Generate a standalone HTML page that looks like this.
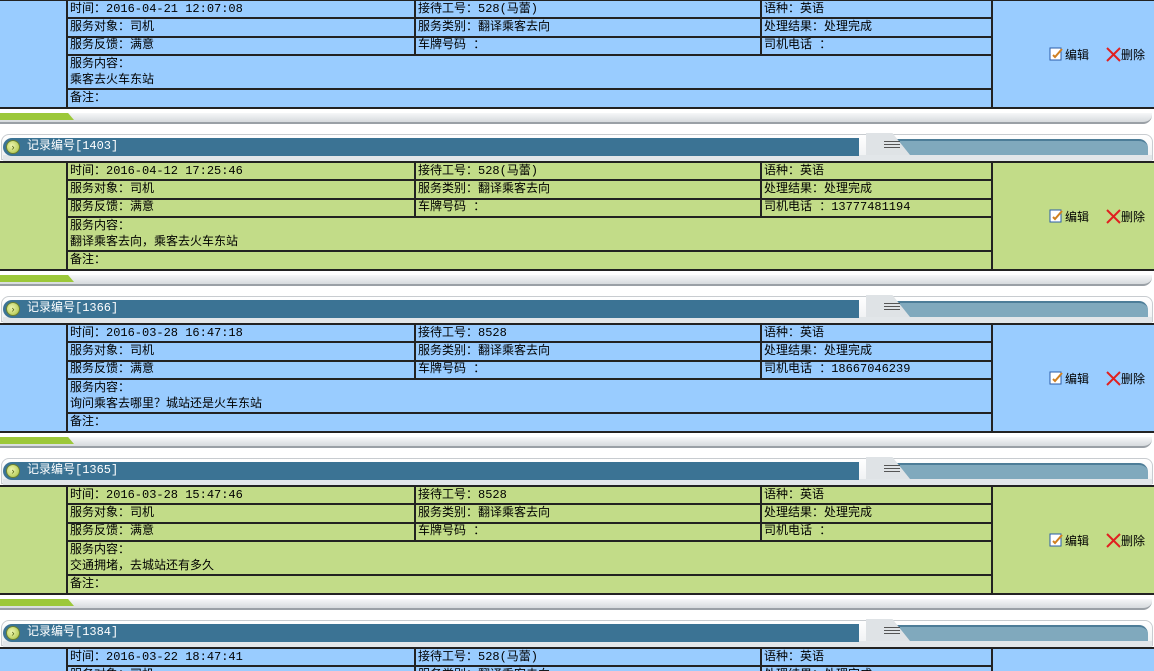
<!DOCTYPE html>
<html><head><meta charset="utf-8"><style>
*{margin:0;padding:0;box-sizing:border-box}
html,body{width:1154px;height:671px;overflow:hidden}
body{background:#fff;position:relative;font:12px "Liberation Mono","Noto Sans CJK SC",monospace;color:#000}
.rec{position:absolute;left:0;width:1154px;height:162px}
.hd{position:absolute;left:0;top:0;width:1154px;height:29px}
.hd .ol{position:absolute;left:1px;top:2px;width:1152px;height:26px;border:1px solid #c8ccd0;border-radius:8px 8px 0 0;background:linear-gradient(#fff,#eef0f2)}
.hd .bar{position:absolute;left:3px;top:6px;width:856px;height:18px;background:#3b7394;border-radius:9px 0 0 9px}
.hd .rb{position:absolute;left:895px;top:7px;width:253px;height:16px;background:#80a9bd;border-top:2px solid #4d7d98;border-radius:0 9px 0 0}
.hd .tab{position:absolute;left:866px;top:1px;width:44px;height:22px;background:#dfe3e6;clip-path:polygon(0 100%,0 0,60% 0,100% 100%);}
.hd .tl{position:absolute;left:884px;width:16px;height:1px;background:#555}
.hd .strip{position:absolute;left:3px;top:23px;width:1149px;height:6px;background:#e2e6e9}
.hd .ic{position:absolute;left:6px;top:8px;width:14px;height:14px;border-radius:50%;background:radial-gradient(circle at 40% 40%,#eef6b0,#a8c040);border:1px solid #6a8030;font:9px "Liberation Sans";color:#4a5a10;text-align:center;line-height:12px}
.hd .tt{position:absolute;left:27px;top:6px;color:#fff;font:12px "Liberation Mono","Noto Sans CJK SC",monospace;line-height:16px}
.tb{position:absolute;left:0;top:29px;width:1154px;height:110px;border-top:2px solid #222;border-bottom:2px solid #222}
.c{position:absolute;padding-left:2px;line-height:16px;white-space:nowrap}
.v{position:absolute;top:0;bottom:0;width:2px;background:#222}
.vs{position:absolute;top:0;height:54px;width:2px;background:#222}
.h{position:absolute;left:68px;width:924px;height:2px;background:#222}
.act{position:absolute;top:45px;left:1049px;line-height:16px}
.ft{position:absolute;left:0;top:139px;width:1154px;height:23px}
.ft .g{position:absolute;left:0;top:4px;width:1152px;height:11px;background:linear-gradient(#f6f7f8,#d6dadd);border-bottom:2px solid #9aa0a6;border-radius:0 0 9px 0}
.ft .gr{position:absolute;left:0;top:4px;width:74px;height:7px;background:#9cc83a;clip-path:polygon(0 0,92% 0,100% 100%,0 100%)}
</style></head><body>

<div class="rec" style="top:-30px;">
 <div class="tb" style="background:#99ccff">
  <div class="v" style="left:66px"></div><div class="vs" style="left:414px"></div><div class="vs" style="left:760px"></div><div class="v" style="left:991px"></div>
  <div class="h" style="top:16px"></div><div class="h" style="top:35px"></div><div class="h" style="top:53px"></div><div class="h" style="top:87px"></div>
  <div class="c" style="left:68px;top:0">时间：2016-04-21 12:07:08</div>
  <div class="c" style="left:416px;top:0">接待工号：528(马蕾)</div>
  <div class="c" style="left:762px;top:0">语种：英语</div>
  <div class="c" style="left:68px;top:18px">服务对象：司机</div>
  <div class="c" style="left:416px;top:18px">服务类别：翻译乘客去向</div>
  <div class="c" style="left:762px;top:18px">处理结果：处理完成</div>
  <div class="c" style="left:68px;top:36px">服务反馈：满意</div>
  <div class="c" style="left:416px;top:36px">车牌号码 ：</div>
  <div class="c" style="left:762px;top:36px">司机电话 ：</div>
  <div class="c" style="left:68px;top:55px">服务内容：<br>乘客去火车东站</div>
  <div class="c" style="left:68px;top:89px">备注：</div>
  <div class="act"><svg width="16" height="16" style="vertical-align:-3px"><rect x="1" y="2" width="11" height="12" fill="#fff" stroke="#2a5ca8"/><path d="M4 9l2 2 7-8" stroke="#d08020" stroke-width="2" fill="none"/></svg>编辑<span style="display:inline-block;width:17px"></span><svg width="15" height="15" style="vertical-align:-3px"><path d="M1 1L14 14M14 1L1 14" stroke="#e02020" stroke-width="2"/></svg>删除</div>
 </div>
 <div class="ft"><div class="g"></div><div class="gr"></div></div>
</div>

<div class="rec" style="top:132px;">
 <div class="hd"><div class="ol"></div><div class="strip"></div><div class="bar"></div><div class="rb"></div><div class="tab"></div><div class="tl" style="top:9px"></div><div class="tl" style="top:12px"></div><div class="tl" style="top:15px"></div><div class="ic">›</div><div class="tt">记录编号[1403]</div></div>
 <div class="tb" style="background:#c2dc88">
  <div class="v" style="left:66px"></div><div class="vs" style="left:414px"></div><div class="vs" style="left:760px"></div><div class="v" style="left:991px"></div>
  <div class="h" style="top:16px"></div><div class="h" style="top:35px"></div><div class="h" style="top:53px"></div><div class="h" style="top:87px"></div>
  <div class="c" style="left:68px;top:0">时间：2016-04-12 17:25:46</div>
  <div class="c" style="left:416px;top:0">接待工号：528(马蕾)</div>
  <div class="c" style="left:762px;top:0">语种：英语</div>
  <div class="c" style="left:68px;top:18px">服务对象：司机</div>
  <div class="c" style="left:416px;top:18px">服务类别：翻译乘客去向</div>
  <div class="c" style="left:762px;top:18px">处理结果：处理完成</div>
  <div class="c" style="left:68px;top:36px">服务反馈：满意</div>
  <div class="c" style="left:416px;top:36px">车牌号码 ：</div>
  <div class="c" style="left:762px;top:36px">司机电话 ：13777481194</div>
  <div class="c" style="left:68px;top:55px">服务内容：<br>翻译乘客去向，乘客去火车东站</div>
  <div class="c" style="left:68px;top:89px">备注：</div>
  <div class="act"><svg width="16" height="16" style="vertical-align:-3px"><rect x="1" y="2" width="11" height="12" fill="#fff" stroke="#2a5ca8"/><path d="M4 9l2 2 7-8" stroke="#d08020" stroke-width="2" fill="none"/></svg>编辑<span style="display:inline-block;width:17px"></span><svg width="15" height="15" style="vertical-align:-3px"><path d="M1 1L14 14M14 1L1 14" stroke="#e02020" stroke-width="2"/></svg>删除</div>
 </div>
 <div class="ft"><div class="g"></div><div class="gr"></div></div>
</div>

<div class="rec" style="top:294px;">
 <div class="hd"><div class="ol"></div><div class="strip"></div><div class="bar"></div><div class="rb"></div><div class="tab"></div><div class="tl" style="top:9px"></div><div class="tl" style="top:12px"></div><div class="tl" style="top:15px"></div><div class="ic">›</div><div class="tt">记录编号[1366]</div></div>
 <div class="tb" style="background:#99ccff">
  <div class="v" style="left:66px"></div><div class="vs" style="left:414px"></div><div class="vs" style="left:760px"></div><div class="v" style="left:991px"></div>
  <div class="h" style="top:16px"></div><div class="h" style="top:35px"></div><div class="h" style="top:53px"></div><div class="h" style="top:87px"></div>
  <div class="c" style="left:68px;top:0">时间：2016-03-28 16:47:18</div>
  <div class="c" style="left:416px;top:0">接待工号：8528</div>
  <div class="c" style="left:762px;top:0">语种：英语</div>
  <div class="c" style="left:68px;top:18px">服务对象：司机</div>
  <div class="c" style="left:416px;top:18px">服务类别：翻译乘客去向</div>
  <div class="c" style="left:762px;top:18px">处理结果：处理完成</div>
  <div class="c" style="left:68px;top:36px">服务反馈：满意</div>
  <div class="c" style="left:416px;top:36px">车牌号码 ：</div>
  <div class="c" style="left:762px;top:36px">司机电话 ：18667046239</div>
  <div class="c" style="left:68px;top:55px">服务内容：<br>询问乘客去哪里？城站还是火车东站</div>
  <div class="c" style="left:68px;top:89px">备注：</div>
  <div class="act"><svg width="16" height="16" style="vertical-align:-3px"><rect x="1" y="2" width="11" height="12" fill="#fff" stroke="#2a5ca8"/><path d="M4 9l2 2 7-8" stroke="#d08020" stroke-width="2" fill="none"/></svg>编辑<span style="display:inline-block;width:17px"></span><svg width="15" height="15" style="vertical-align:-3px"><path d="M1 1L14 14M14 1L1 14" stroke="#e02020" stroke-width="2"/></svg>删除</div>
 </div>
 <div class="ft"><div class="g"></div><div class="gr"></div></div>
</div>

<div class="rec" style="top:456px;">
 <div class="hd"><div class="ol"></div><div class="strip"></div><div class="bar"></div><div class="rb"></div><div class="tab"></div><div class="tl" style="top:9px"></div><div class="tl" style="top:12px"></div><div class="tl" style="top:15px"></div><div class="ic">›</div><div class="tt">记录编号[1365]</div></div>
 <div class="tb" style="background:#c2dc88">
  <div class="v" style="left:66px"></div><div class="vs" style="left:414px"></div><div class="vs" style="left:760px"></div><div class="v" style="left:991px"></div>
  <div class="h" style="top:16px"></div><div class="h" style="top:35px"></div><div class="h" style="top:53px"></div><div class="h" style="top:87px"></div>
  <div class="c" style="left:68px;top:0">时间：2016-03-28 15:47:46</div>
  <div class="c" style="left:416px;top:0">接待工号：8528</div>
  <div class="c" style="left:762px;top:0">语种：英语</div>
  <div class="c" style="left:68px;top:18px">服务对象：司机</div>
  <div class="c" style="left:416px;top:18px">服务类别：翻译乘客去向</div>
  <div class="c" style="left:762px;top:18px">处理结果：处理完成</div>
  <div class="c" style="left:68px;top:36px">服务反馈：满意</div>
  <div class="c" style="left:416px;top:36px">车牌号码 ：</div>
  <div class="c" style="left:762px;top:36px">司机电话 ：</div>
  <div class="c" style="left:68px;top:55px">服务内容：<br>交通拥堵，去城站还有多久</div>
  <div class="c" style="left:68px;top:89px">备注：</div>
  <div class="act"><svg width="16" height="16" style="vertical-align:-3px"><rect x="1" y="2" width="11" height="12" fill="#fff" stroke="#2a5ca8"/><path d="M4 9l2 2 7-8" stroke="#d08020" stroke-width="2" fill="none"/></svg>编辑<span style="display:inline-block;width:17px"></span><svg width="15" height="15" style="vertical-align:-3px"><path d="M1 1L14 14M14 1L1 14" stroke="#e02020" stroke-width="2"/></svg>删除</div>
 </div>
 <div class="ft"><div class="g"></div><div class="gr"></div></div>
</div>

<div class="rec" style="top:618px;height:53px;overflow:hidden;">
 <div class="hd"><div class="ol"></div><div class="strip"></div><div class="bar"></div><div class="rb"></div><div class="tab"></div><div class="tl" style="top:9px"></div><div class="tl" style="top:12px"></div><div class="tl" style="top:15px"></div><div class="ic">›</div><div class="tt">记录编号[1384]</div></div>
 <div class="tb" style="background:#99ccff;height:24px;border-bottom:0">
  <div class="v" style="left:66px"></div><div class="vs" style="left:414px"></div><div class="vs" style="left:760px"></div><div class="v" style="left:991px"></div>
  <div class="h" style="top:16px"></div>
  <div class="c" style="left:68px;top:0">时间：2016-03-22 18:47:41</div>
  <div class="c" style="left:416px;top:0">接待工号：528(马蕾)</div>
  <div class="c" style="left:762px;top:0">语种：英语</div>
  <div class="c" style="left:68px;top:18px">服务对象：司机</div>
  <div class="c" style="left:416px;top:18px">服务类别：翻译乘客去向</div>
  <div class="c" style="left:762px;top:18px">处理结果：处理完成</div>
 </div>
</div>

</body></html>
